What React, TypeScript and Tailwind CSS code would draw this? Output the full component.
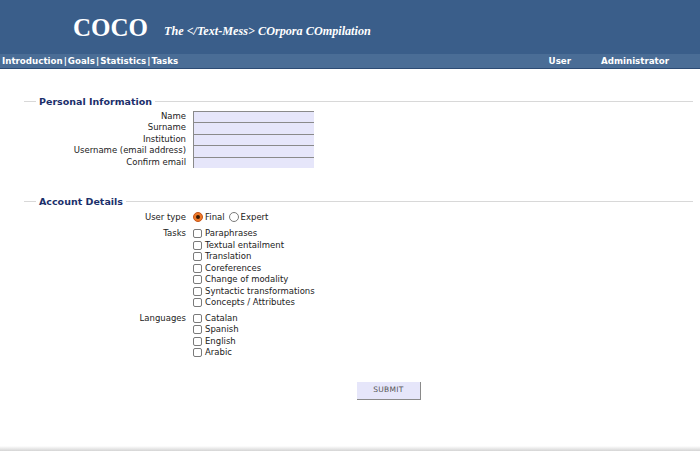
import React from 'react';

const font = "font-['DejaVu_Sans',sans-serif]";

const Legend = ({ title }: { title: string }) => (
  <div className="flex items-center ml-[24px] mr-[7px]">
    <div className="w-[12px] h-px bg-[#d8d8d8]" />
    <span className="px-[3px] text-[9.5px] font-bold text-[#1b2f6b] leading-none">{title}</span>
    <div className="flex-1 h-px bg-[#d8d8d8]" />
  </div>
);

const Check = ({ label }: { label: string }) => (
  <div className="flex items-center h-[11.5px] gap-[3px]">
    <span className="w-[9px] h-[9px] border border-[#7a7a7a] rounded-[2px] bg-white" />
    <span>{label}</span>
  </div>
);

const Radio = ({ label, checked }: { label: string; checked?: boolean }) => (
  <div className="flex items-center gap-[2px]">
    {checked ? (
      <span className="w-[10px] h-[10px] rounded-full bg-[#f07a2a] border border-[#c4561a] flex items-center justify-center">
        <span className="w-[4px] h-[4px] rounded-full bg-[#3a1a05]" />
      </span>
    ) : (
      <span className="w-[10px] h-[10px] rounded-full border border-[#7a7a7a] bg-white" />
    )}
    <span>{label}</span>
  </div>
);

export default function App() {
  const personal = ['Name', 'Surname', 'Institution', 'Username (email address)', 'Confirm email'];
  const tasks = [
    'Paraphrases',
    'Textual entailment',
    'Translation',
    'Coreferences',
    'Change of modality',
    'Syntactic transformations',
    'Concepts / Attributes',
  ];
  const langs = ['Catalan', 'Spanish', 'English', 'Arabic'];

  return (
    <div className={`w-[700px] h-[451px] bg-white flex flex-col ${font} text-[8.5px] text-[#222]`}>
      {/* header */}
      <div className="h-[54px] bg-[#3a5e8a] flex items-end pl-[73px] pb-[14px]">
        <span className="font-['Liberation_Serif',serif] font-bold text-[25px] leading-none text-white">COCO</span>
        <span className="ml-[16px] mb-[3px] font-['Liberation_Serif',serif] font-bold italic text-[12.2px] leading-none text-white">
          The &lt;/Text-Mess&gt; COrpora COmpilation
        </span>
      </div>
      <div className="h-[15px] bg-[#4a6d96] border-b border-[#2c4b74] flex items-center text-white font-bold text-[8.7px] leading-none">
        <div className="pl-[2px] flex-1">
          Introduction<span className="mx-[1px]">|</span>Goals<span className="mx-[1px]">|</span>Statistics<span className="mx-[1px]">|</span>Tasks
        </div>
        <span className="mr-[30px]">User</span>
        <span className="mr-[31px]">Administrator</span>
      </div>

      {/* personal information */}
      <div className="mt-[28px]">
        <Legend title="Personal Information" />
        <div className="grid grid-cols-[186px_121px] gap-x-[7px] mt-[4px]">
          {personal.map((p) => (
            <React.Fragment key={p}>
              <div className="text-right h-[11.5px] leading-[11.5px]">{p}</div>
              <div className="h-[11.5px] bg-[#e6e6fa] border-t border-l border-[#8a8a8a]" />
            </React.Fragment>
          ))}
        </div>
      </div>

      {/* account details */}
      <div className="mt-[29px]">
        <Legend title="Account Details" />
        <div className="grid grid-cols-[186px_1fr] gap-x-[7px] mt-[5px] leading-[11.5px]">
          <div className="text-right">User type</div>
          <div className="flex items-center gap-[4px] h-[11.5px]">
            <Radio label="Final" checked />
            <Radio label="Expert" />
          </div>
          <div className="text-right mt-[5px]">Tasks</div>
          <div className="mt-[5px]">
            {tasks.map((t) => (
              <Check key={t} label={t} />
            ))}
          </div>
          <div className="text-right mt-[4px]">Languages</div>
          <div className="mt-[4px]">
            {langs.map((t) => (
              <Check key={t} label={t} />
            ))}
          </div>
        </div>
      </div>

      <div className="flex justify-start pl-[357px] mt-[23px]">
        <button className="w-[64px] h-[18px] bg-[#e6e6fa] border-r border-b border-[#8a8a8a] text-[7.5px] text-[#555] tracking-[0.3px]">
          SUBMIT
        </button>
      </div>

      <div className="flex-1" />
      <div className="h-[5px] bg-gradient-to-b from-white to-[#d4d4d4]" />
    </div>
  );
}
